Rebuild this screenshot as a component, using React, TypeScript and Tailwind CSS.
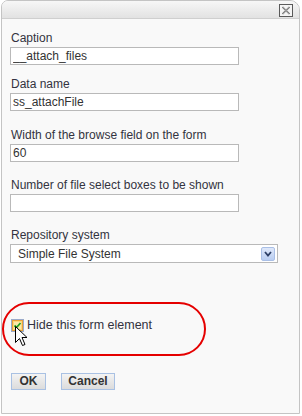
import React from "react";

function CloseButton() {
  return (
    <div className="w-[14px] h-[13px] border border-[#5a5a5a] bg-[#f4f4f4] flex items-center justify-center">
      <svg width="10" height="9" viewBox="0 0 10 9">
        <path d="M1.5 1 L8.5 8 M8.5 1 L1.5 8" stroke="#6a6a6a" strokeWidth="1.6" />
        <path d="M2 1 L8 8 M8 1 L2 8" stroke="#d8d8d8" strokeWidth="0.5" />
      </svg>
    </div>
  );
}

function Field({ label, value, mt }: { label: string; value: string; mt: string }) {
  return (
    <div className={mt}>
      <div className="text-[12px] leading-[14px] text-[#333340] mb-[2px] pl-[1px]">{label}</div>
      <input
        readOnly
        value={value}
        className="block w-[229px] h-[18px] border border-[#b9b9b9] bg-white px-[2px] text-[12px] text-[#333] outline-none"
      />
    </div>
  );
}

function Checkbox() {
  return (
    <svg width="13" height="13" viewBox="0 0 13 13" className="block">
      <rect x="0.5" y="0.5" width="12" height="12" fill="none" stroke="#3a5a9a" strokeDasharray="1 1" />
      <rect x="1.5" y="1.5" width="10" height="10" fill="#fbd77a" stroke="#e8a23a" />
      <rect x="3" y="3" width="7" height="7" fill="#fde9a8" />
      <path d="M3.5 6.5 L5.5 8.5 L9.5 4" fill="none" stroke="#21a121" strokeWidth="1.8" />
    </svg>
  );
}

function Cursor() {
  return (
    <svg width="13" height="22" viewBox="0 0 13 22" className="block">
      <path
        d="M0.5 0.5 L0.5 16.5 L4.5 12.5 L7.5 19.5 L10 18.5 L7 11.5 L12 11.5 Z"
        fill="#ffffff"
        stroke="#000000"
        strokeWidth="1"
      />
    </svg>
  );
}

export default function App() {
  return (
    <div className="relative w-[302px] h-[416px] bg-white font-['Liberation_Sans',Arial,sans-serif]">
      <div className="ml-[1px] w-[299px] h-[414px] border border-[#c4c4c4] rounded-tl-[7px] rounded-tr-[10px] bg-[#f9f9f9] flex flex-col overflow-hidden">
        <div className="h-[18px] shrink-0 border-b border-[#cfcfcf] bg-gradient-to-b from-[#f7f7f7] to-[#e2e2e2] flex justify-end items-start pr-[6px] pt-[3px]">
          <CloseButton />
        </div>
        <div className="pl-[8px] pt-[12px] flex flex-col">
          <Field label="Caption" value="__attach_files" mt="mt-0" />
          <Field label="Data name" value="ss_attachFile" mt="mt-[12px]" />
          <Field label="Width of the browse field on the form" value="60" mt="mt-[17px]" />
          <Field label="Number of file select boxes to be shown" value="" mt="mt-[16px]" />
          <div className="mt-[16px]">
            <div className="text-[12px] leading-[14px] text-[#333340] mb-[2px] pl-[1px]">Repository system</div>
            <div className="w-[268px] h-[19px] border border-[#b9b9b9] bg-white flex items-center justify-between pl-[7px] pr-[2px]">
              <span className="text-[12px] text-[#333]">Simple File System</span>
              <div className="w-[14px] h-[14px] border border-[#a9bfe6] rounded-[2px] bg-gradient-to-b from-[#dfe8fa] to-[#b9cdf1] flex items-center justify-center">
                <svg width="8" height="6" viewBox="0 0 8 6" className="block">
                  <path d="M1 1 L4 4.5 L7 1" fill="none" stroke="#2d3f66" strokeWidth="1.8" />
                </svg>
              </div>
            </div>
          </div>
          <div className="mt-[55px] flex items-center gap-[3px] pl-[1px]">
            <Checkbox />
            <span className="text-[12.5px] leading-[14px] text-[#333340]">Hide this form element</span>
          </div>
          <div className="mt-[41px] flex gap-[15px] pl-[1px]">
            <button className="w-[35px] h-[17px] border border-[#a9c1e3] bg-gradient-to-b from-[#f3f3f3] to-[#dcdcdc] text-[12px] font-bold text-[#333] leading-[15px]">
              OK
            </button>
            <button className="w-[54px] h-[17px] border border-[#a9c1e3] bg-gradient-to-b from-[#f3f3f3] to-[#dcdcdc] text-[12px] font-bold text-[#333] leading-[15px]">
              Cancel
            </button>
          </div>
        </div>
      </div>
      <div className="absolute left-[2px] top-[302px] w-[204px] h-[54px] border-[2.5px] border-[#e50000] rounded-[27px] pointer-events-none" />
      <div className="absolute left-[15px] top-[326px]">
        <Cursor />
      </div>
    </div>
  );
}
